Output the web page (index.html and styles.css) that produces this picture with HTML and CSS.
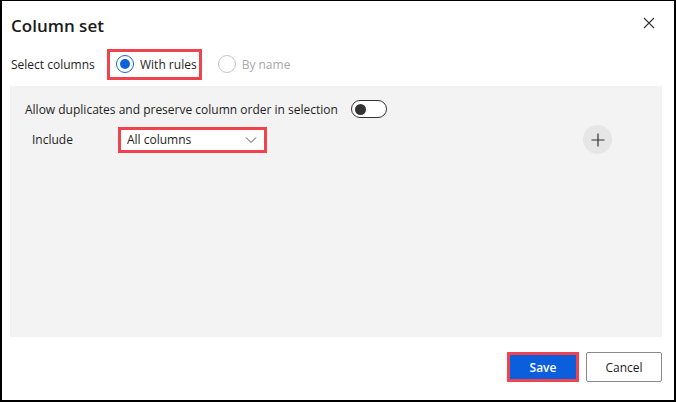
FILE: index.html
```html
<!DOCTYPE html>
<html>
<head>
<meta charset="utf-8">
<link rel="stylesheet" href="styles.css">
</head>
<body>
<div class="dialog">
  <div class="header">
    <h1 class="title">Column set</h1>
    <button class="close" aria-label="Close">
      <svg width="12" height="12" viewBox="0 0 12 12"><path d="M1 1L11 11M11 1L1 11" stroke="#333" stroke-width="1.1" fill="none"/></svg>
    </button>
  </div>
  <div class="select-row">
    <span class="label">Select columns</span>
    <div class="radio-group">
      <label class="radio checked highlight"><span class="circle"><span class="dot"></span></span><span>With rules</span></label>
      <label class="radio disabled"><span class="circle"></span><span>By name</span></label>
    </div>
  </div>
  <div class="panel">
    <div class="toggle-row">
      <span>Allow duplicates and preserve column order in selection</span>
      <span class="toggle"><span class="knob"></span></span>
    </div>
    <div class="include-row">
      <span class="inc-label">Include</span>
      <div class="dropdown highlight">
        <span>All columns</span>
        <svg width="12" height="8" viewBox="0 0 12 8"><path d="M1 1.5L6 6.5L11 1.5" stroke="#555" stroke-width="1" fill="none"/></svg>
      </div>
      <span class="spacer"></span>
      <button class="add" aria-label="Add">
        <svg width="14" height="14" viewBox="0 0 14 14"><path d="M7 0.5V13.5M0.5 7H13.5" stroke="#333" stroke-width="1.2" fill="none"/></svg>
      </button>
    </div>
  </div>
  <div class="footer">
    <button class="btn primary">Save</button>
    <button class="btn secondary">Cancel</button>
  </div>
</div>
</body>
</html>
```
FILE: styles.css
```css
html, body { margin: 0; padding: 0; background: #fff; }
body { font-family: "Open Sans", "Noto Sans", sans-serif; color: #1e1e1e; }
.dialog {
  width: 676px; height: 402px; box-sizing: border-box;
  border: 2px solid #000; border-top-width: 1px;
  display: flex; flex-direction: column; background: #fff;
}
.header {
  display: flex; justify-content: space-between; align-items: center;
  height: 44px; padding: 4px 14px 0 9px; box-sizing: border-box;
}
.title { margin: 0; font-size: 17px; font-weight: 600; color: #1b1b1b; }
.close { border: 0; background: none; padding: 4px; display: flex; margin-right: 1px; margin-top: -4px; }
.select-row {
  display: flex; align-items: center; height: 32px; margin-top: 3px;
  padding-left: 9px; font-size: 12px;
}
.label { width: 96px; }
.radio-group { display: flex; align-items: center; gap: 10px; }
.radio { display: flex; align-items: center; gap: 6px; height: 25px; box-sizing: border-box; padding: 0 5px 0 6px; }
.radio.highlight { border: 3px solid #f0434d; padding: 0 2px 0 6px; height: 31px; }
.circle {
  width: 18px; height: 18px; box-sizing: border-box; border-radius: 50%;
  border: 1px solid #1a66d8; display: flex; align-items: center; justify-content: center;
}
.dot { width: 10px; height: 10px; border-radius: 50%; background: #0b62d9; }
.radio.disabled { color: #a8a8a8; }
.radio.disabled .circle { border-color: #c4c4c4; }
.panel {
  margin: 6px 12px 0 8px; height: 251px; background: #f3f3f3;
  padding: 14px 0 0 15px; box-sizing: border-box; font-size: 12px;
}
.toggle-row { display: flex; align-items: center; gap: 13px; height: 18px; }
.toggle {
  width: 36px; height: 18px; box-sizing: border-box; border: 1px solid #333;
  border-radius: 9px; display: flex; align-items: center; padding-left: 3px; background: #fff;
}
.knob { width: 11px; height: 11px; border-radius: 50%; background: #333; }
.include-row { display: flex; align-items: center; margin-top: 7px; padding-left: 7px; padding-right: 50px; }
.inc-label { width: 86px; }
.dropdown {
  width: 149px; height: 26px; box-sizing: border-box; border: 3px solid #f0434d; background: #fff;
  display: flex; align-items: center; justify-content: space-between; padding: 0 7px 0 6px;
}
.spacer { flex: 1; }
.add {
  width: 29px; height: 29px; border-radius: 50%; border: 0; background: #e6e6e6;
  display: flex; align-items: center; justify-content: center; padding: 0;
}
.footer { display: flex; justify-content: flex-end; gap: 7px; padding: 15px 12px 0 0; }
.btn {
  height: 30px; box-sizing: border-box; font-family: inherit; font-size: 12px; padding: 0;
}
.btn.primary {
  width: 72px; border: 3px solid #f0434d; background: #0c5fdc; color: #fff; font-weight: 600;
}
.btn.secondary {
  width: 76px; border: 1px solid #8a8a8a; border-radius: 2px; background: #fff; color: #1b1b1b;
}
```
